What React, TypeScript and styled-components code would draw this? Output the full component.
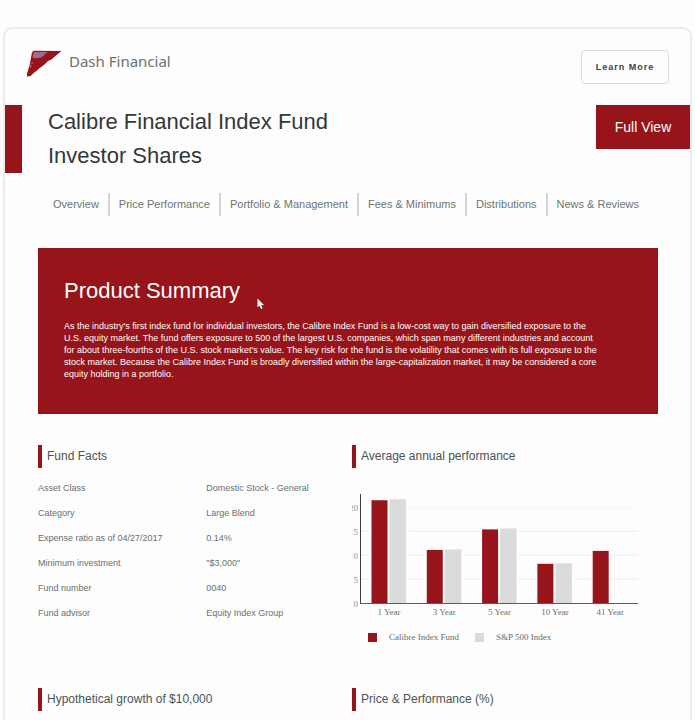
import React from "react";
import styled, { createGlobalStyle } from "styled-components";

const red = "#97141a";
const sans = '"Liberation Sans", Arial, sans-serif';
const serif = '"Liberation Serif", "Times New Roman", serif';

const GlobalStyle = createGlobalStyle`
  * { box-sizing: border-box; }
  body { margin: 0; background: #fdfdfd; font-family: ${sans}; }
`;

const Page = styled.div`
  min-height: 100vh;
  padding: 27px 3px 0;
  display: flex;
  flex-direction: column;
`;

const Card = styled.div`
  flex: 1;
  border: 2px solid #ebebeb;
  border-bottom: 0;
  border-radius: 9px 9px 0 0;
`;

const Header = styled.header`
  display: flex;
  justify-content: space-between;
  padding: 21px;
`;

const Brand = styled.a`
  display: flex;
  align-items: flex-start;
  gap: 7px;
  height: 28px;
  color: #6c706f;
  font: 15px/23px "Noto Sans", sans-serif;
  text-decoration: none;
`;

const LearnMore = styled.button`
  width: 88px;
  height: 34px;
  padding: 0;
  border: 1px solid #dcdcdc;
  border-radius: 4px;
  background: transparent;
  color: #3e4345;
  font: bold 9px ${sans};
  letter-spacing: 1px;
`;

const Hero = styled.section`
  display: flex;
  align-items: flex-start;
  justify-content: space-between;
`;

const Title = styled.h1`
  margin: 0;
  padding-left: 26px;
  border-left: 17px solid ${red};
  color: #333839;
  font: 22px/34px ${sans};
`;

const FullView = styled.button`
  width: 94px;
  height: 44px;
  padding: 0;
  border: 0;
  background: ${red};
  color: #fff;
  font: 14px ${sans};
`;

const Nav = styled.nav`
  display: flex;
  margin: 20px 32px 32px 39px;
`;

const NavLink = styled.a`
  padding: 0 9px;
  color: #6c7673;
  font: 11px/23px ${sans};
  text-decoration: none;
  white-space: nowrap;

  & + & {
    border-left: 2px solid #d4d4d4;
  }
`;

const Summary = styled.section`
  position: relative;
  margin: 0 32px 31px 33px;
  padding: 29px 54px 34px 26px;
  background: ${red};
  color: #fff;
`;

const SummaryTitle = styled.h2`
  margin: 0 0 15px;
  font: 22px/28px ${sans};
`;

const SummaryText = styled.p`
  margin: 0;
  font: 9px/12px ${sans};
`;

const Pointer = styled.svg`
  position: absolute;
  left: 219px;
  top: 50px;
`;

const Panels = styled.div`
  display: grid;
  grid-template-columns: 1fr 1fr;
  grid-template-rows: minmax(243px, auto) auto;
  align-items: start;
  column-gap: 8px;
  margin: 0 32px 0 33px;
`;

const PanelTitle = styled.h3`
  margin: 0;
  padding-left: 5px;
  border-left: 4px solid ${red};
  color: #4b5452;
  font: 12px/23px ${sans};
`;

const Facts = styled.table`
  width: 100%;
  margin-top: 8px;
  border-collapse: collapse;
  color: #69706e;
  font: 9px/25px ${sans};
`;

const FactName = styled.th`
  width: 55%;
  padding: 0;
  font-weight: normal;
  text-align: left;
`;

const FactValue = styled.td`
  padding: 0;
`;

const Chart = styled.svg`
  display: block;
  margin-top: 22px;
  overflow: hidden;
  font: 9px ${serif};
  fill: #6d716f;
`;

const Legend = styled.ul`
  display: flex;
  gap: 16px;
  margin: 12px 0 0;
  padding: 0 0 0 16px;
  list-style: none;
  color: #666b69;
  font: 9px/18px ${serif};
`;

const LegendItem = styled.li<{ $color: string }>`
  display: flex;
  align-items: center;
  gap: 12px;

  &::before {
    content: "";
    width: 9px;
    height: 9px;
    background: ${(p) => p.$color};
  }
`;

const navItems = [
  "Overview",
  "Price Performance",
  "Portfolio & Management",
  "Fees & Minimums",
  "Distributions",
  "News & Reviews",
];

const facts = [
  ["Asset Class", "Domestic Stock - General"],
  ["Category", "Large Blend"],
  ["Expense ratio as of 04/27/2017", "0.14%"],
  ["Minimum investment", '"$3,000"'],
  ["Fund number", "0040"],
  ["Fund advisor", "Equity Index Group"],
];

const bars = [
  { label: "1 Year", x: 19.5, fund: 21.5, index: 21.7 },
  { label: "3 Year", x: 74.8, fund: 11.1, index: 11.2 },
  { label: "5 Year", x: 130.1, fund: 15.4, index: 15.6 },
  { label: "10 Year", x: 185.4, fund: 8.2, index: 8.3 },
  { label: "41 Year", x: 240.7, fund: 10.9, index: 0 },
];

const baseY = 113;
const unit = 4.78;
const toY = (v: number) => baseY - v * unit;

function BrandMark() {
  return (
    <svg width="36" height="28" viewBox="0 0 36 28" aria-hidden="true">
      <path d="M7.5 .8 35.5 1 30 5.5 25.5 9.5 22 11 18 15 14 17.8 11 20.4 8 22.8 4.5 26 1 26.5 .8 24.5 2 20.5 3.5 15.5 5.2 7 5.8 3Z" fill={red} />
      <path d="M8 2H21.5L19 4 17.5 6 15 7.5 10 8.2 6.2 7.6Z" fill="#a06a94" />
      <path d="M6.5 12.5 5.5 14M5 15 4.5 17.5" stroke="#c9807f" fill="none" />
    </svg>
  );
}

function PerformanceChart() {
  return (
    <Chart width="286" height="126" viewBox="0 0 286 126" role="img" aria-label="Average annual performance">
      {[5, 10, 15, 20].map((v) => (
        <line key={v} x1="9" x2="286" y1={toY(v)} y2={toY(v)} stroke={v === 20 ? "#f6f6f6" : "#ebebeb"} />
      ))}
      {[0, 5, 10, 15, 20].map((v) => (
        <text key={v} x="6" y={toY(v) + 4} textAnchor="end" fill="#8b8e8d">{v}</text>
      ))}
      {bars.map((b) => (
        <g key={b.label}>
          <rect x={b.x - 2} y={toY(b.fund) - 2} width={b.index ? 39 : 20} height={b.fund * unit + 2} fill="#fdfdfd" />
          <rect x={b.x} y={toY(b.fund)} width="16" height={b.fund * unit} fill={red} />
          <rect x={b.x + 18} y={toY(b.index)} width="16.5" height={b.index * unit} fill="#dbdbdb" />
          <text x={b.x + 17.5} y="125" textAnchor="middle">{b.label}</text>
        </g>
      ))}
      <line x1="8.5" x2="8.5" y1="4" y2="114" stroke="#3c3c3c" />
      <line x1="8" x2="286" y1="113.5" y2="113.5" stroke="#5c5c5c" />
    </Chart>
  );
}

export default function App() {
  return (
    <Page>
      <GlobalStyle />
      <Card>
        <Header>
          <Brand href="#">
            <BrandMark />
            Dash Financial
          </Brand>
          <LearnMore type="button">Learn More</LearnMore>
        </Header>
        <main>
          <Hero>
            <Title>
              Calibre Financial Index Fund
              <br />
              Investor Shares
            </Title>
            <FullView type="button">Full View</FullView>
          </Hero>
          <Nav>
            {navItems.map((item) => (
              <NavLink key={item} href="#">{item}</NavLink>
            ))}
          </Nav>
          <Summary>
            <SummaryTitle>Product Summary</SummaryTitle>
            <SummaryText>
              As the industry's first index fund for individual investors, the Calibre Index Fund is a low-cost way to
              gain diversified exposure to the U.S. equity market. The fund offers exposure to 500 of the largest U.S.
              companies, which span many different industries and account for about three-fourths of the U.S. stock
              market's value. The key risk for the fund is the volatility that comes with its full exposure to the
              stock market. Because the Calibre Index Fund is broadly diversified within the large-capitalization
              market, it may be considered a core equity holding in a portfolio.
            </SummaryText>
            <Pointer width="8" height="12" viewBox="0 0 8 12" aria-hidden="true">
              <path d="M.5 .5V9.5L2.5 7.6 4 11 5.6 10.3 4.2 7H7Z" fill="#fff" />
            </Pointer>
          </Summary>
          <Panels>
            <section>
              <PanelTitle>Fund Facts</PanelTitle>
              <Facts>
                <tbody>
                  {facts.map(([name, value]) => (
                    <tr key={name}>
                      <FactName scope="row">{name}</FactName>
                      <FactValue>{value}</FactValue>
                    </tr>
                  ))}
                </tbody>
              </Facts>
            </section>
            <section>
              <PanelTitle>Average annual performance</PanelTitle>
              <PerformanceChart />
              <Legend>
                <LegendItem $color={red}>Calibre Index Fund</LegendItem>
                <LegendItem $color="#dbdbdb">S&amp;P 500 Index</LegendItem>
              </Legend>
            </section>
            <PanelTitle>Hypothetical growth of $10,000</PanelTitle>
            <PanelTitle>Price &amp; Performance (%)</PanelTitle>
          </Panels>
        </main>
      </Card>
    </Page>
  );
}
